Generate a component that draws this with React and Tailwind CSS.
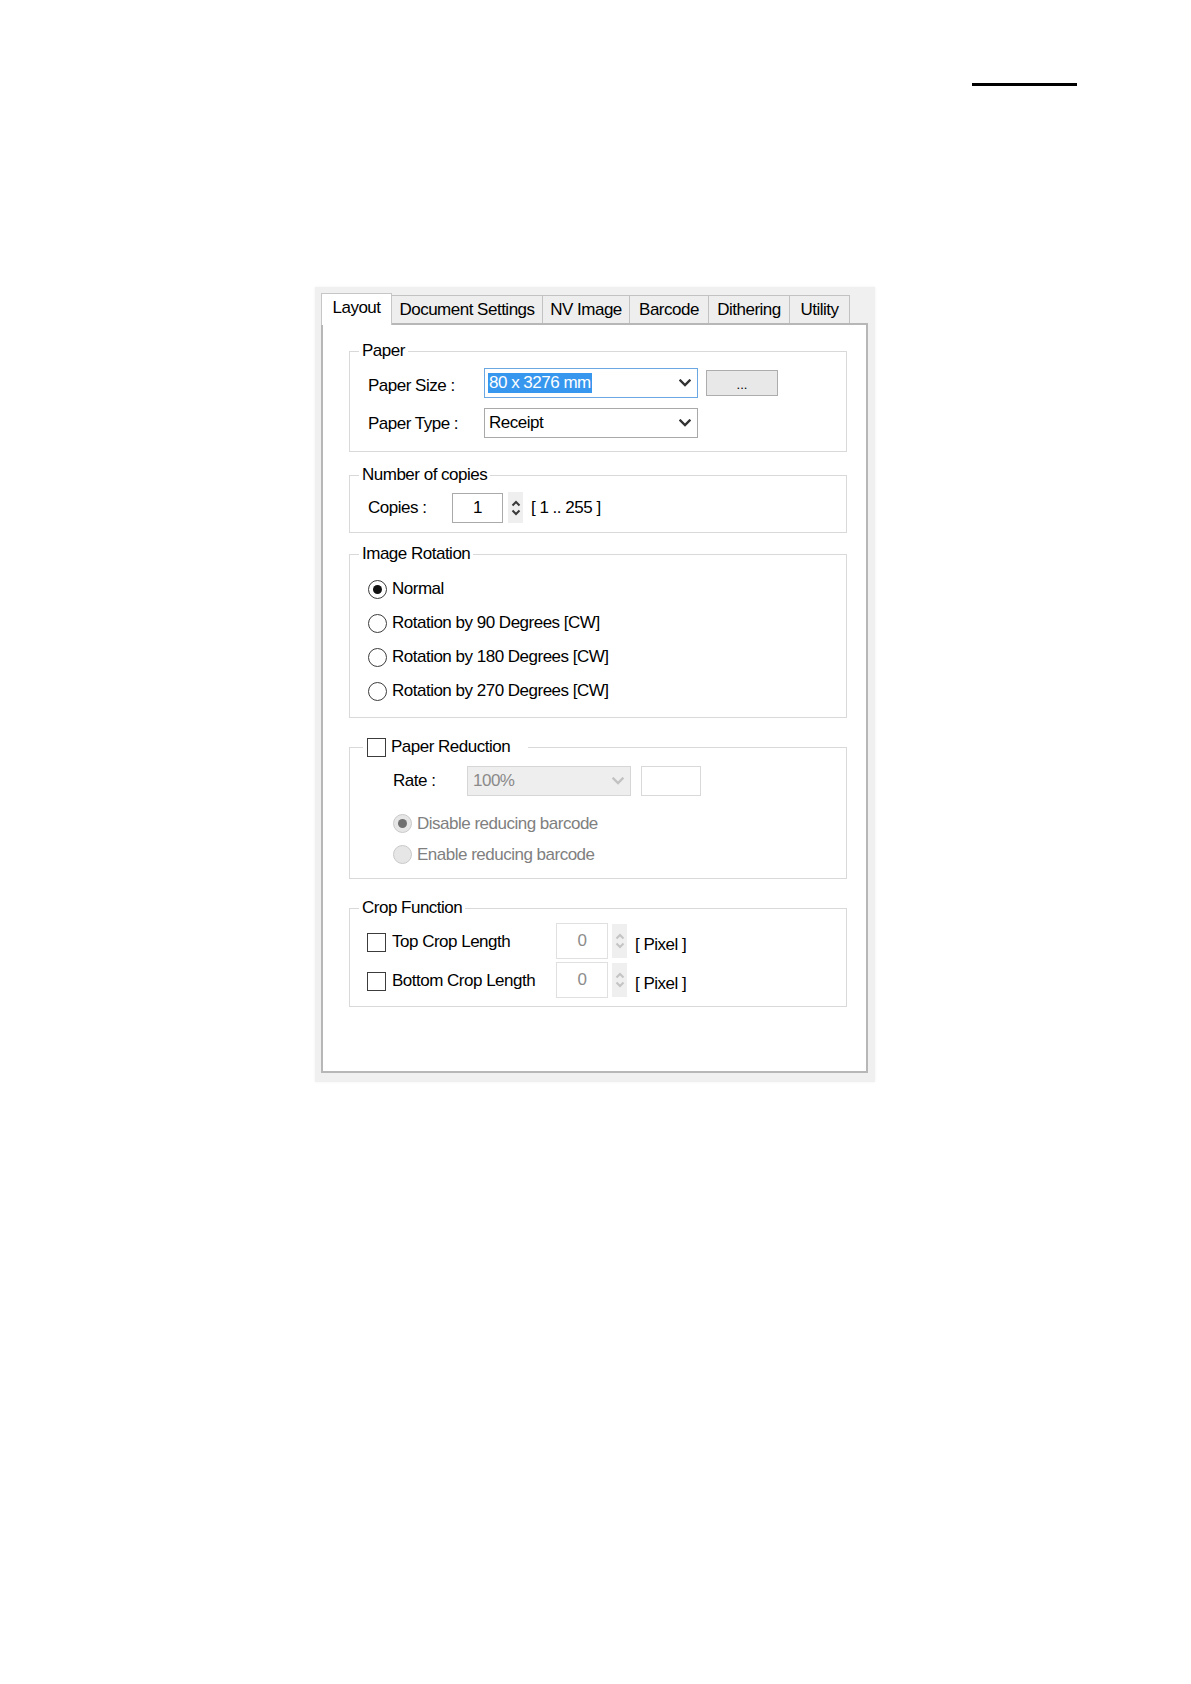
import React from "react";

function Chevron({ color = "#333333", w = 12, h = 8, sw = 2.3 }) {
  return (
    <svg width={w} height={h} viewBox="0 0 12 8" fill="none">
      <path d="M1.5 1.5 L6 6 L10.5 1.5" stroke={color} strokeWidth={sw} strokeLinecap="square" />
    </svg>
  );
}

function ChevronUp({ color = "#333333", sw = 2 }) {
  return (
    <svg width="10" height="7" viewBox="0 0 10 7" fill="none">
      <path d="M1.5 5.5 L5 2 L8.5 5.5" stroke={color} strokeWidth={sw} />
    </svg>
  );
}

function ChevronDown({ color = "#333333", sw = 2 }) {
  return (
    <svg width="10" height="7" viewBox="0 0 10 7" fill="none">
      <path d="M1.5 1.5 L5 5 L8.5 1.5" stroke={color} strokeWidth={sw} />
    </svg>
  );
}

function Spinner({ disabled }) {
  const c = disabled ? "#c4c4c4" : "#3a3a3a";
  return (
    <div className="flex h-full w-[15px] flex-col items-center justify-center gap-[2px] bg-[#efefef]">
      <ChevronUp color={c} />
      <ChevronDown color={c} />
    </div>
  );
}

function Radio({ checked, disabled }) {
  return (
    <div
      className={
        disabled
          ? "flex h-[19px] w-[19px] shrink-0 items-center justify-center rounded-full border border-[#c9c9c9] bg-[#e6e6e6]"
          : "flex h-[19px] w-[19px] shrink-0 items-center justify-center rounded-full border border-[#3c3c3c] bg-white"
      }
    >
      {checked && (
        <div className={disabled ? "h-[9px] w-[9px] rounded-full bg-[#707070]" : "h-[9px] w-[9px] rounded-full bg-[#111111]"} />
      )}
    </div>
  );
}

function Checkbox() {
  return <div className="h-[19px] w-[19px] shrink-0 border border-[#3c3c3c] bg-white" />;
}

function Fieldset({ legend, className, children }) {
  return (
    <fieldset className={"w-[498px] border border-[#d9d9d9] " + className}>
      <legend className="ml-[9px] h-[20px] px-[3px] leading-[20px]">{legend}</legend>
      {children}
    </fieldset>
  );
}

const tabs = [
  { label: "Document Settings", w: "w-[151px]" },
  { label: "NV Image", w: "w-[87px]" },
  { label: "Barcode", w: "w-[79px]" },
  { label: "Dithering", w: "w-[81px]" },
  { label: "Utility", w: "w-[60px]" },
];

export default function App() {
  return (
    <div className="h-[1684px] w-[1191px] overflow-hidden bg-white font-['Liberation_Sans',Arial,sans-serif] text-[17px] tracking-[-0.5px] text-black">
      <div className="ml-[972px] mt-[83px] h-[3px] w-[105px] bg-black" />

      <div className="ml-[315px] mt-[201px] h-[795px] w-[560px] bg-[#f0f0f0] pl-[6px] pr-[7px] pt-[6px] shadow-[0_0_3px_#f2f2f2]">
        {/* tab strip */}
        <div className="flex h-[30px] items-end">
          <div className="relative z-10 -mb-[2px] flex h-[32px] w-[71px] items-center justify-center border border-b-0 border-[#c6c6c6] bg-white pb-[3px]">
            Layout
          </div>
          {tabs.map((t) => (
            <div
              key={t.label}
              className={
                "flex h-[28px] items-center justify-center border border-b-0 border-l-0 border-[#c2c2c2] bg-[#eeeeee] " + t.w
              }
            >
              {t.label}
            </div>
          ))}
        </div>

        {/* panel */}
        <div className="flex h-[750px] w-[547px] flex-col border-2 border-[#b7b7b7] bg-white pl-[26px]">
          {/* Paper */}
          <Fieldset legend="Paper" className="mt-[16px] h-[111px]">
            <div className="flex flex-col gap-[9px] pl-[18px] pt-[7px]">
              <div className="flex items-center">
                <div className="w-[116px] pt-[5px]">Paper Size :</div>
                <div className="flex h-[30px] w-[214px] items-center justify-between border border-[#6aa7e3] bg-white pl-[3px] pr-[6px]">
                  <span className="bg-[#3797ee] px-[1px] leading-[20px] text-white">80 x 3276 mm</span>
                  <Chevron />
                </div>
                <div className="ml-[8px] flex h-[26px] w-[72px] items-center justify-center border border-[#adadad] bg-[#e8e8e8] pt-[3px] text-[13px] tracking-normal">
                  ...
                </div>
              </div>
              <div className="flex items-center">
                <div className="w-[116px] pt-[2px]">Paper Type :</div>
                <div className="flex h-[30px] w-[214px] items-center justify-between border border-[#a9a9a9] bg-white pl-[4px] pr-[6px]">
                  <span className="leading-[20px]">Receipt</span>
                  <Chevron />
                </div>
              </div>
            </div>
          </Fieldset>

          {/* Number of copies */}
          <Fieldset legend="Number of copies" className="mt-[13px] h-[68px]">
            <div className="flex items-center pl-[18px] pt-[7px]">
              <div className="w-[84px]">Copies :</div>
              <div className="flex h-[30px] w-[51px] items-center justify-center border border-[#aaaaaa] bg-white">1</div>
              <div className="ml-[5px] h-[31px]">
                <Spinner />
              </div>
              <div className="ml-[8px]">[ 1 .. 255 ]</div>
            </div>
          </Fieldset>

          {/* Image Rotation */}
          <Fieldset legend="Image Rotation" className="mt-[11px] h-[174px]">
            <div className="flex flex-col pl-[18px] pt-[8px]">
              {[
                ["Normal", true],
                ["Rotation by 90 Degrees [CW]", false],
                ["Rotation by 180 Degrees [CW]", false],
                ["Rotation by 270 Degrees [CW]", false],
              ].map(([label, checked]) => (
                <div key={label} className="flex h-[34px] items-center gap-[5px]">
                  <Radio checked={checked} />
                  <span>{label}</span>
                </div>
              ))}
            </div>
          </Fieldset>

          {/* Paper Reduction */}
          <fieldset className="mt-[19px] h-[142px] w-[498px] border border-[#d9d9d9]">
            <legend className="ml-[13px] flex h-[20px] items-center gap-[5px] pl-[4px] pr-[18px] leading-[20px]">
              <Checkbox />
              <span>Paper Reduction</span>
            </legend>
            <div className="flex flex-col pl-[43px] pt-[9px]">
              <div className="flex items-center">
                <div className="w-[74px]">Rate :</div>
                <div className="flex h-[30px] w-[164px] items-center justify-between border border-[#d6d6d6] bg-[#eeeeee] pl-[5px] pr-[6px] text-[#8a8a8a]">
                  <span>100%</span>
                  <Chevron color="#c2c2c2" />
                </div>
                <div className="ml-[10px] h-[30px] w-[60px] border border-[#d9d9d9] bg-white" />
              </div>
              <div className="mt-[12px] flex h-[31px] items-center gap-[5px] text-[#808080]">
                <Radio checked disabled />
                <span>Disable reducing barcode</span>
              </div>
              <div className="flex h-[31px] items-center gap-[5px] text-[#808080]">
                <Radio disabled />
                <span>Enable reducing barcode</span>
              </div>
            </div>
          </fieldset>

          {/* Crop Function */}
          <Fieldset legend="Crop Function" className="mt-[19px] h-[109px]">
            <div className="flex flex-col gap-[3px] pl-[17px] pt-[5px]">
              {["Top Crop Length", "Bottom Crop Length"].map((label) => (
                <div key={label} className="flex h-[36px] items-center">
                  <div className="flex w-[189px] items-center gap-[6px] pt-[2px]">
                    <Checkbox />
                    <span>{label}</span>
                  </div>
                  <div className="flex h-[36px] w-[52px] justify-center border border-[#e0e0e0] bg-white pt-[4px] text-[#8c8c8c]">
                    0
                  </div>
                  <div className="ml-[4px] h-[34px]">
                    <Spinner disabled />
                  </div>
                  <div className="ml-[8px] pt-[8px]">[ Pixel ]</div>
                </div>
              ))}
            </div>
          </Fieldset>
        </div>
      </div>
    </div>
  );
}
